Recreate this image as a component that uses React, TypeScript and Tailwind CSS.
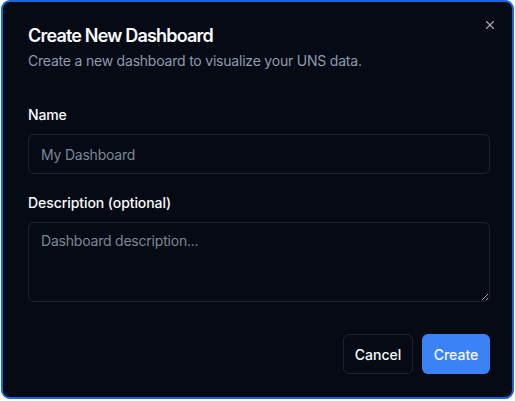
import React from "react";

export default function App() {
  return (
    <div
      className="w-[515px] h-[401px] bg-white pl-[1px] pt-0 pr-[1px] pb-[2px]"
      style={{ fontFamily: "Inter, 'Noto Sans', sans-serif" }}
    >
      <div className="relative h-full w-full rounded-[9px] border-2 border-[#1766e0] bg-[#050a14] pl-[25px] pr-[22px] pt-[25px] pb-[23px] flex flex-col">
        <button className="absolute right-[14px] top-[15px] h-4 w-4 flex items-center justify-center text-[#a3a8b0]">
          <svg width="14" height="14" viewBox="0 0 24 24" fill="none" stroke="currentColor" strokeWidth="2" strokeLinecap="round" strokeLinejoin="round">
            <path d="M18 6 6 18" />
            <path d="m6 6 12 12" />
          </svg>
        </button>
        <h2 className="text-[18px] font-semibold leading-[18px] tracking-[-0.045em] text-[#f8fafc]">
          Create New Dashboard
        </h2>
        <p className="mt-[6px] text-[14px] leading-5 tracking-[-0.015em] text-[#8e9bb0]">
          Create a new dashboard to visualize your UNS data.
        </p>
        <div className="mt-[34px] flex flex-col">
          <label className="text-[14px] font-medium leading-5 tracking-[-0.01em] text-[#f8fafc]">Name</label>
          <input
            className="mt-[9px] h-10 w-full rounded-md border border-[#1c2433] bg-transparent px-3 text-[14px] tracking-[-0.015em] text-[#f8fafc] placeholder:text-[#7c8799] outline-none"
            placeholder="My Dashboard"
          />
          <label className="mt-[19px] text-[14px] font-medium leading-5 tracking-[-0.005em] text-[#f8fafc]">
            Description (optional)
          </label>
          <textarea
            className="mt-[9px] h-20 w-full rounded-md border border-[#1c2433] bg-transparent px-3 py-2 text-[14px] leading-5 tracking-[-0.015em] text-[#f8fafc] placeholder:text-[#7c8799] outline-none"
            placeholder="Dashboard description..."
          />
        </div>
        <div className="mt-auto flex justify-end gap-[9px]">
          <button className="h-10 w-[70px] rounded-md border border-[#1c2433] bg-[#050a14] text-[14px] font-medium text-[#f8fafc]">
            Cancel
          </button>
          <button className="h-10 w-[68px] rounded-md bg-[#3b82f6] text-[14px] font-medium text-[#f8fafc]">
            Create
          </button>
        </div>
      </div>
    </div>
  );
}
